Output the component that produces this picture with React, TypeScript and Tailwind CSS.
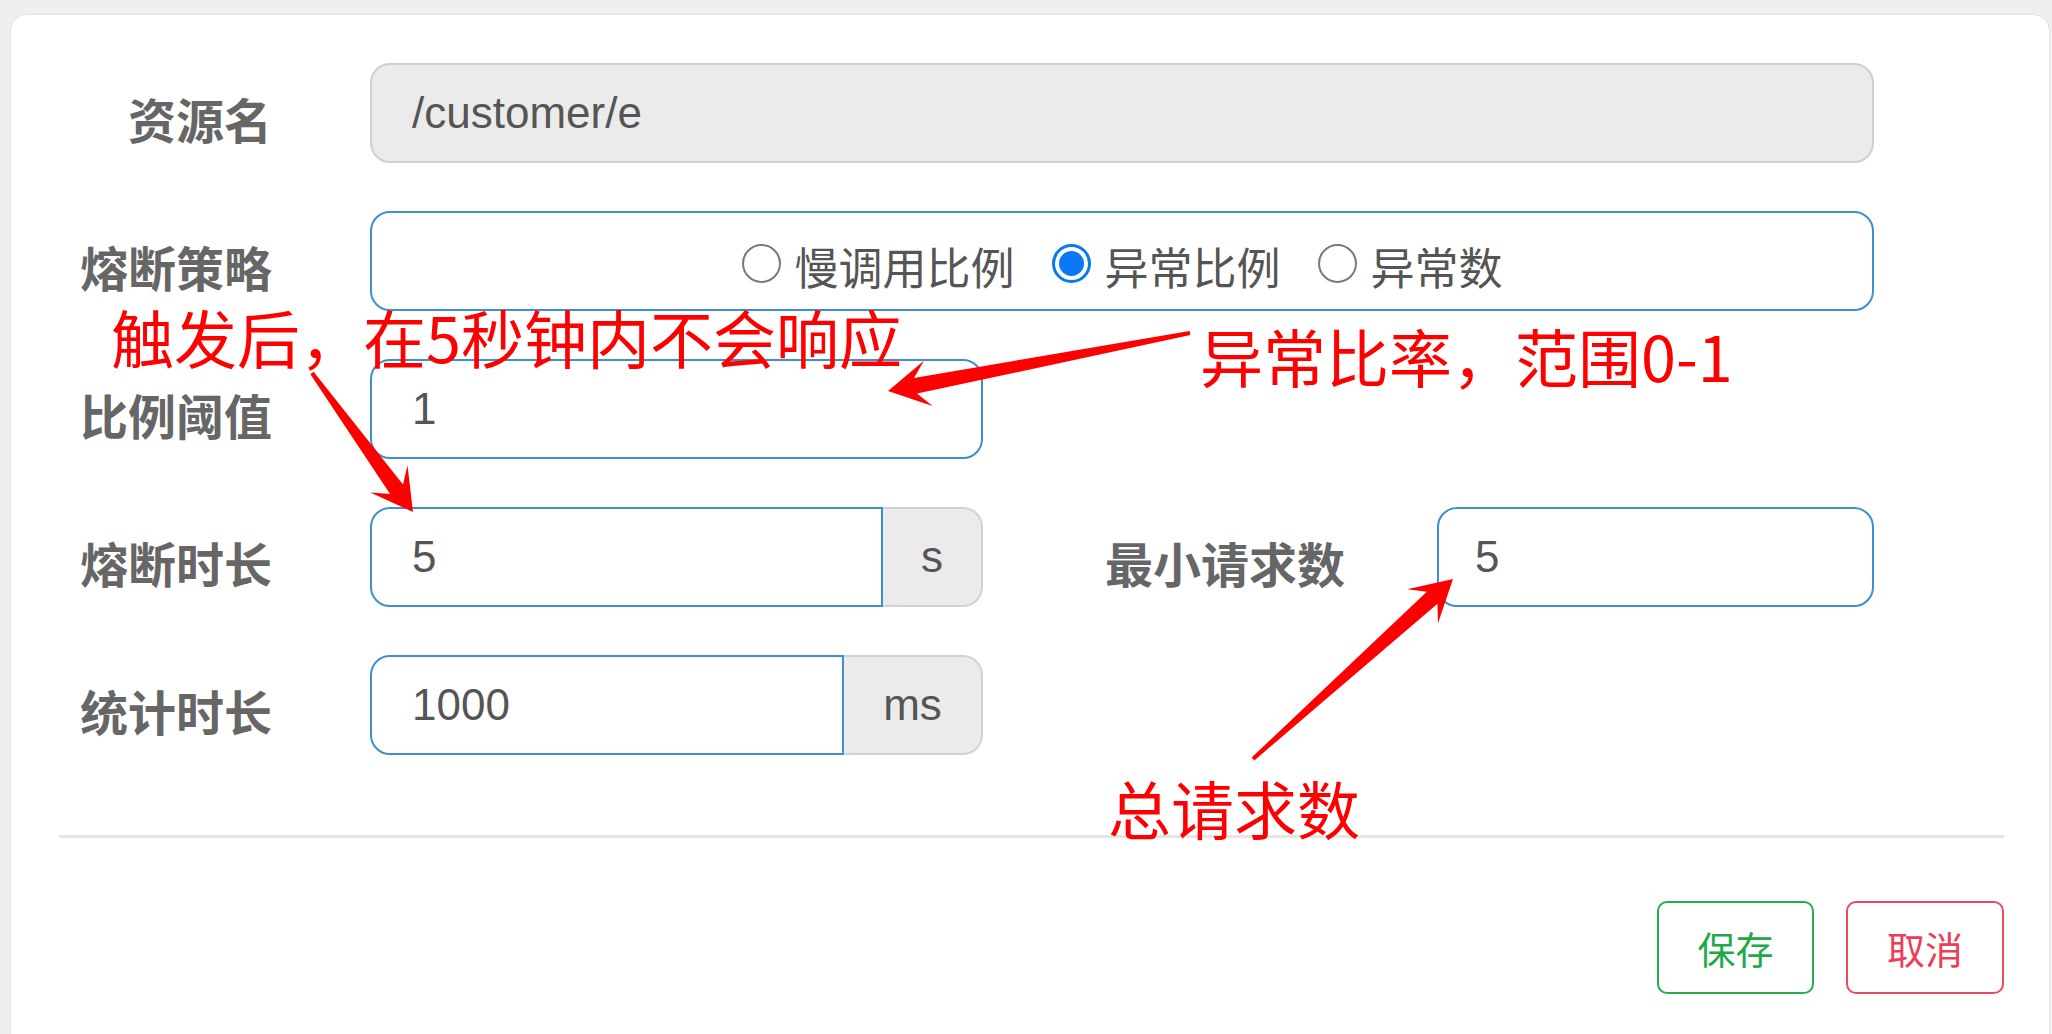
import React from 'react';

const cjk = { fontFamily: '"Noto Sans CJK SC", "Noto Sans", sans-serif' };
const latin = { fontFamily: '"Liberation Sans", "Noto Sans CJK SC", sans-serif' };

type Pt = [number, number];

// tapered screenshot-tool arrow, tail -> tip
function arrowPoints(tail: Pt, tip: Pt) {
  const [tx, ty] = tail;
  const [px, py] = tip;
  const len = Math.hypot(px - tx, py - ty);
  const ux = (px - tx) / len;
  const uy = (py - ty) / len;
  const nx = -uy;
  const ny = ux;
  const hl = 41, hw = 23, jl = 28, sw = 8, tw = 2;
  const pts: Pt[] = [
    [tx + nx * tw, ty + ny * tw],
    [px - ux * jl + nx * sw, py - uy * jl + ny * sw],
    [px - ux * hl + nx * hw, py - uy * hl + ny * hw],
    [px, py],
    [px - ux * hl - nx * hw, py - uy * hl - ny * hw],
    [px - ux * jl - nx * sw, py - uy * jl - ny * sw],
    [tx - nx * tw, ty - ny * tw],
  ];
  return pts.map(p => `${p[0].toFixed(1)},${p[1].toFixed(1)}`).join(' ');
}

function Label({ text, width }: { text: string; width: string }) {
  return (
    <div className={`${width} shrink-0 pt-[10px] text-right text-[48px] font-bold leading-none text-[#666]`} style={cjk}>
      {text}
    </div>
  );
}

function Radio({ checked, text }: { checked?: boolean; text: string }) {
  return (
    <div className="flex items-center gap-[14px]">
      {checked ? (
        <span className="flex h-[39px] w-[39px] items-center justify-center rounded-full border-[3px] border-[#0a78f5] bg-white">
          <span className="h-[25px] w-[25px] rounded-full bg-[#0a78f5]" />
        </span>
      ) : (
        <span className="h-[39px] w-[39px] rounded-full border-[2px] border-[#7a7a7a] bg-white" />
      )}
      <span className="pt-[6px] text-[44px] leading-none text-[#555]" style={cjk}>{text}</span>
    </div>
  );
}

export default function App() {
  return (
    <div className="relative min-h-screen overflow-hidden bg-[#efefef] pl-[10px] pt-[14px] pr-[2px]">
      <div className="min-h-[1040px] rounded-t-[16px] border border-[#e2e2e2] bg-white pt-[48px]">
        <div className="flex flex-col gap-[48px]">
          {/* 资源名 */}
          <div className="flex h-[100px] items-center">
            <Label text="资源名" width="w-[261px]" />
            <div className="ml-[98px] flex h-full w-[1504px] items-center rounded-[20px] border-2 border-[#cfcfcf] bg-[#ebebeb] pl-[40px] text-[44px] text-[#555]" style={latin}>
              /customer/e
            </div>
          </div>

          {/* 熔断策略 */}
          <div className="flex h-[100px] items-center">
            <Label text="熔断策略" width="w-[261px]" />
            <div className="ml-[98px] flex h-full w-[1504px] items-center justify-center gap-[37px] rounded-[20px] border-2 border-[#3f8fce] bg-white pt-[4px]">
              <Radio text="慢调用比例" />
              <Radio text="异常比例" checked />
              <Radio text="异常数" />
            </div>
          </div>

          {/* 比例阈值 */}
          <div className="flex h-[100px] items-center">
            <Label text="比例阈值" width="w-[261px]" />
            <div className="ml-[98px] flex h-full w-[613px] items-center rounded-[20px] border-2 border-[#3f8fce] bg-white pl-[40px] text-[44px] text-[#555]" style={latin}>
              1
            </div>
          </div>

          {/* 熔断时长 / 最小请求数 */}
          <div className="flex h-[100px] items-center">
            <Label text="熔断时长" width="w-[261px]" />
            <div className="ml-[98px] flex h-full w-[613px]">
              <div className="flex flex-1 items-center rounded-l-[20px] border-2 border-[#3f8fce] bg-white pl-[40px] text-[44px] text-[#555]" style={latin}>
                5
              </div>
              <div className="flex w-[100px] items-center justify-center rounded-r-[20px] border-2 border-l-0 border-[#d2d2d2] bg-[#ebebeb] text-[44px] text-[#555]" style={latin}>
                s
              </div>
            </div>
            <Label text="最小请求数" width="w-[362px]" />
            <div className="ml-[92px] flex h-full w-[437px] items-center rounded-[20px] border-2 border-[#3f8fce] bg-white pl-[36px] text-[44px] text-[#555]" style={latin}>
              5
            </div>
          </div>

          {/* 统计时长 */}
          <div className="flex h-[100px] items-center">
            <Label text="统计时长" width="w-[261px]" />
            <div className="ml-[98px] flex h-full w-[613px]">
              <div className="flex flex-1 items-center rounded-l-[20px] border-2 border-[#3f8fce] bg-white pl-[40px] text-[44px] text-[#555]" style={latin}>
                1000
              </div>
              <div className="flex w-[139px] items-center justify-center rounded-r-[20px] border-2 border-l-0 border-[#d2d2d2] bg-[#ebebeb] text-[44px] text-[#555]" style={latin}>
                ms
              </div>
            </div>
          </div>
        </div>

        <div className="ml-[48px] mr-[45px] mt-[80px] h-[3px] bg-[#e6e6e6]" />

        <div className="mr-[45px] mt-[63px] flex justify-end gap-[32px]">
          <button className="flex h-[93px] w-[157px] items-center justify-center rounded-[10px] border-2 border-[#22b04b] bg-white text-[38px] text-[#22a947]" style={cjk}>
            保存
          </button>
          <button className="flex h-[93px] w-[158px] items-center justify-center rounded-[10px] border-2 border-[#ec4a61] bg-white text-[38px] text-[#ea3f58]" style={cjk}>
            取消
          </button>
        </div>
      </div>

      {/* annotations drawn over the form */}
      <div className="pointer-events-none absolute left-[111px] top-[304px] whitespace-nowrap text-[63px] leading-none text-[#ff0000]" style={cjk}>
        触发后，在5秒钟内不会响应
      </div>
      <div className="pointer-events-none absolute left-[1200px] top-[323px] whitespace-nowrap text-[63px] leading-none text-[#ff0000]" style={cjk}>
        异常比率，范围0-1
      </div>
      <div className="pointer-events-none absolute left-[1108px] top-[775px] whitespace-nowrap text-[63px] leading-none text-[#ff0000]" style={cjk}>
        总请求数
      </div>
      <svg className="pointer-events-none absolute left-0 top-0" width="2052" height="1034">
        <polygon points={arrowPoints([1190, 333], [888, 391])} fill="#ff0000" />
        <polygon points={arrowPoints([312, 373], [413, 512])} fill="#ff0000" />
        <polygon points={arrowPoints([1253, 759], [1453, 579])} fill="#ff0000" />
      </svg>
    </div>
  );
}
